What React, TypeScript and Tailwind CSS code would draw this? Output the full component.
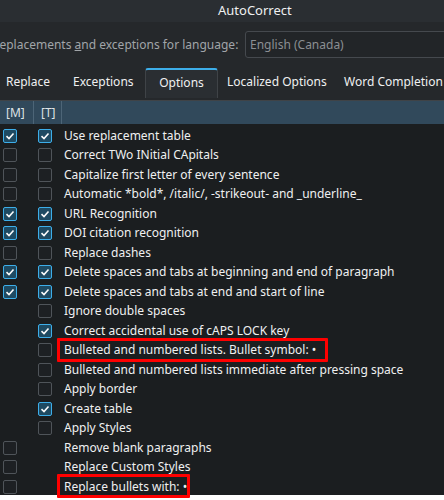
import React from "react";

type Item = {
  label: string;
  m?: boolean | null; // null = no checkbox in column
  t?: boolean | null;
  boxed?: number; // width of red outline
};

const items: Item[] = [
  { label: "Use replacement table", m: true, t: true },
  { label: "Correct TWo INitial CApitals", m: false, t: false },
  { label: "Capitalize first letter of every sentence", m: false, t: false },
  { label: "Automatic *bold*, /italic/, -strikeout- and _underline_", m: false, t: false },
  { label: "URL Recognition", m: true, t: true },
  { label: "DOI citation recognition", m: true, t: true },
  { label: "Replace dashes", m: false, t: false },
  { label: "Delete spaces and tabs at beginning and end of paragraph", m: true, t: true },
  { label: "Delete spaces and tabs at end and start of line", m: true, t: true },
  { label: "Ignore double spaces", m: null, t: false },
  { label: "Correct accidental use of cAPS LOCK key", m: null, t: true },
  { label: "Bulleted and numbered lists. Bullet symbol: •", m: null, t: false, boxed: 271 },
  { label: "Bulleted and numbered lists immediate after pressing space", m: null, t: false },
  { label: "Apply border", m: null, t: false },
  { label: "Create table", m: null, t: true },
  { label: "Apply Styles", m: null, t: false },
  { label: "Remove blank paragraphs", m: false, t: null },
  { label: "Replace Custom Styles", m: false, t: null },
  { label: "Replace bullets with: •", m: false, t: null, boxed: 133 },
];

function CheckBox({ checked }: { checked: boolean }) {
  if (checked) {
    return (
      <div className="w-[14px] h-[14px] rounded-[2px] border border-[#3daee9] bg-[#1e4a62] flex items-center justify-center">
        <svg width="10" height="10" viewBox="0 0 10 10">
          <polyline points="1.5,5.2 4,7.5 8.5,2.5" fill="none" stroke="#fcfcfc" strokeWidth="1.6" />
        </svg>
      </div>
    );
  }
  return <div className="w-[14px] h-[14px] rounded-[2px] border border-[#4f5459] bg-[#1d2023]" />;
}

const tabs = ["Replace", "Exceptions", "Options", "Localized Options", "Word Completion"];

export default function App() {
  return (
    <div
      className="w-[444px] h-[500px] overflow-hidden bg-white text-[12px] text-[#eff0f1]"
      style={{ fontFamily: '"Noto Sans", sans-serif' }}
    >
      {/* title bar */}
      <div className="h-[22px] bg-[#2a2e32] flex items-center pl-[218px] text-[13px] text-[#eff0f1]">
        AutoCorrect
      </div>

      <div className="bg-[#25282b] h-[473px] flex flex-col">
        {/* language row */}
        <div className="h-[45px] shrink-0 flex items-center whitespace-nowrap">
          <span className="-ml-[8px] text-[#a1a5a9] w-[253px] shrink-0">
            Replacements <span className="underline">a</span>nd exceptions for language:
          </span>
          <div className="h-[27px] flex-1 -mr-[10px] border border-[#45494e] rounded-[3px] bg-[#222528] flex items-center pl-[4px] text-[#8b8f93]">
            English (Canada)
          </div>
        </div>

        {/* tabs */}
        <div className="h-[30px] shrink-0 flex items-end whitespace-nowrap">
          <div className="pl-[6px] w-[73px] h-[30px] flex items-center">{tabs[0]}</div>
          <div className="w-[72px] h-[30px] flex items-center">{tabs[1]}</div>
          <div className="w-[73px] h-[30px] flex items-center justify-center bg-[#2a2e32] border-x border-[#3f4347] border-t-2 border-t-[#3daee9] rounded-t-[3px] -mb-px pb-[2px]">
            {tabs[2]}
          </div>
          <div className="pl-[9px] w-[126px] h-[30px] flex items-center">{tabs[3]}</div>
          <div className="h-[30px] flex items-center">{tabs[4]}</div>
        </div>

        {/* list */}
        <div className="mt-[3px] h-[395px] shrink-0 border-t border-[#3f4347] bg-[#1b1e20] flex flex-col">
          <div className="h-[23px] shrink-0 bg-[#31495b] flex items-stretch text-[#dfe3e6]">
            <div className="w-[34px] border-r border-[#4d6577] flex items-center pl-[6px]">[M]</div>
            <div className="w-[28px] border-r border-[#4d6577] flex items-center pl-[7px]">[T]</div>
          </div>
          <div className="flex flex-col pt-[2px]">
            {items.map((it, i) => (
              <div key={i} className="h-[19.5px] shrink-0 flex items-center whitespace-nowrap relative">
                <div className="w-[34px] pl-[3px] flex items-center">
                  {it.m !== null && it.m !== undefined && <CheckBox checked={it.m} />}
                </div>
                <div className="w-[30px] pl-[4px] flex items-center">
                  {it.t !== null && it.t !== undefined && <CheckBox checked={it.t} />}
                </div>
                <span>{it.label}</span>
                {it.boxed && (
                  <div
                    className="absolute left-[57px] top-[-3px] h-[24px] border-[3px] border-[#ff0000] rounded-[1px]"
                    style={{ width: it.boxed }}
                  />
                )}
              </div>
            ))}
          </div>
        </div>
      </div>
    </div>
  );
}
